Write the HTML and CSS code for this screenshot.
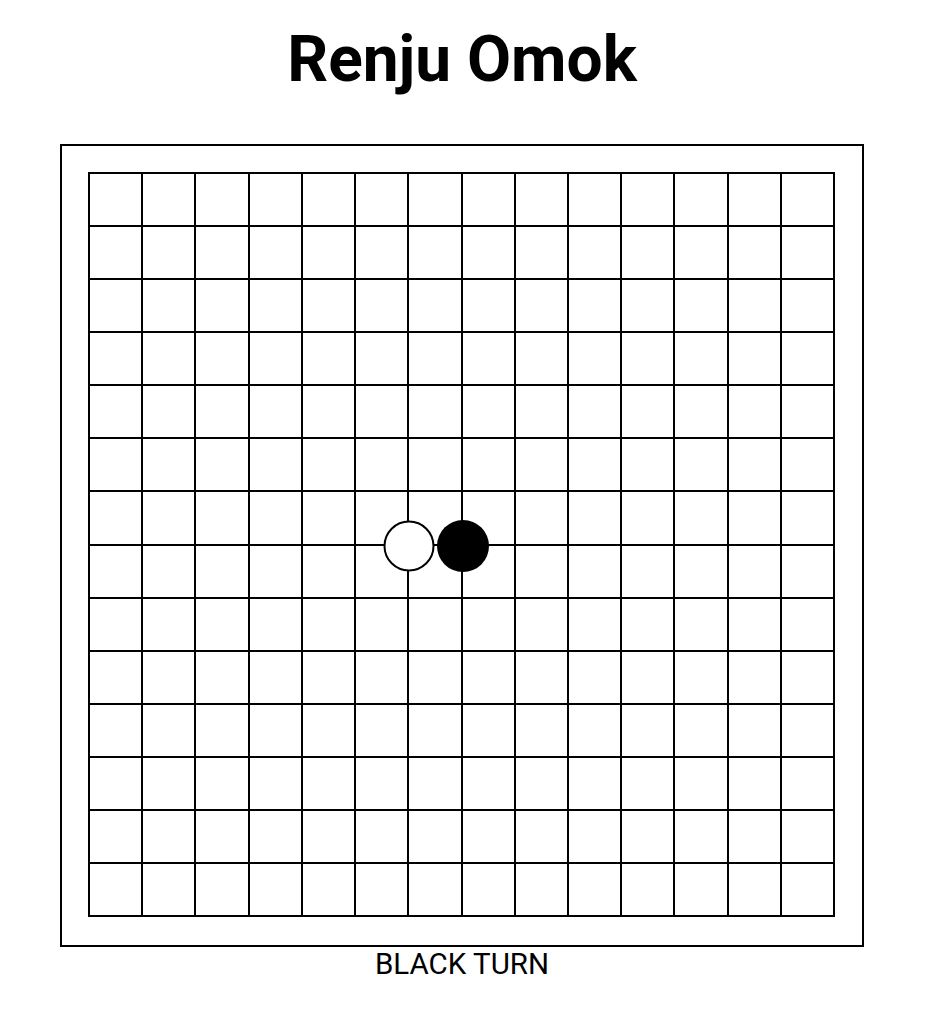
FILE: index.html
```html
<!DOCTYPE html>
<html lang="en">
<head>
<meta charset="utf-8">
<title>Renju Omok</title>
<link rel="stylesheet" href="styles.css">
</head>
<body>
<main class="page">
  <h1 class="title">Renju Omok</h1>
  <div class="board">
    <div class="grid-wrap">
      <div class="grid" id="grid"></div>
      <div class="stone white" style="left: calc(100% * 6 / 14); top: calc(100% * 7 / 14);"></div>
      <div class="stone black" style="left: calc(100% * 7 / 14); top: calc(100% * 7 / 14);"></div>
    </div>
  </div>
  <div class="status">BLACK TURN</div>
</main>
<script>
  var g = document.getElementById('grid');
  for (var i = 0; i < 196; i++) {
    var c = document.createElement('div');
    c.className = 'cell';
    g.appendChild(c);
  }
</script>
</body>
</html>
```

FILE: styles.css
```css
html, body {
  margin: 0;
  padding: 0;
  background: #fff;
}

body {
  font-family: Roboto, "Open Sans", sans-serif;
  color: #000;
}

.page {
  width: 924px;
  display: flex;
  flex-direction: column;
  align-items: center;
}

.title {
  margin: 17px 0 0;
  font-size: 64px;
  line-height: 86px;
  font-weight: 700;
}

.board {
  margin-top: 41px;
  box-sizing: border-box;
  width: 804px;
  height: 803px;
  border: 2px solid #000;
  padding: 26px 27px 28px 26px;
}

.grid-wrap {
  position: relative;
  width: 747px;
  height: 745px;
}

.grid {
  box-sizing: border-box;
  width: 100%;
  height: 100%;
  display: grid;
  grid-template-columns: repeat(14, 1fr);
  grid-template-rows: repeat(14, 1fr);
  border-top: 2px solid #000;
  border-left: 2px solid #000;
}

.cell {
  border-right: 2px solid #000;
  border-bottom: 2px solid #000;
}

.stone {
  position: absolute;
  box-sizing: border-box;
  border-radius: 50%;
  transform: translate(-50%, -50%);
  margin-left: 1px;
  margin-top: 1px;
}

.stone.white {
  width: 51px;
  height: 51px;
  background: #fff;
  border: 2px solid #000;
}

.stone.black {
  width: 52px;
  height: 52px;
  background: #000;
}

.status {
  margin-top: 3px;
  font-size: 29.5px;
  line-height: 28px;
}
```
